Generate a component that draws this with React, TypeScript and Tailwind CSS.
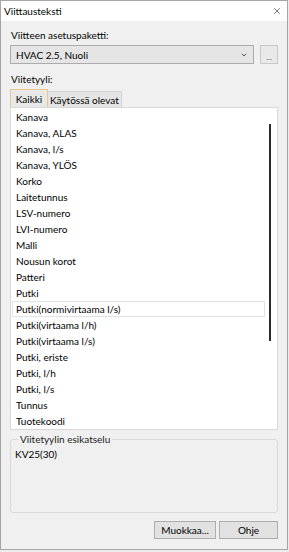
import { X, ChevronDown } from 'lucide-react';

const items = [
  'Kanava',
  'Kanava, ALAS',
  'Kanava, l/s',
  'Kanava, YLÖS',
  'Korko',
  'Laitetunnus',
  'LSV-numero',
  'LVI-numero',
  'Malli',
  'Nousun korot',
  'Patteri',
  'Putki',
  'Putki(normivirtaama l/s)',
  'Putki(virtaama l/h)',
  'Putki(virtaama l/s)',
  'Putki, eriste',
  'Putki, l/h',
  'Putki, l/s',
  'Tunnus',
  'Tuotekoodi',
];

const focused = 'Putki(normivirtaama l/s)';

const App = () => {
  return (
    <div className="w-[289px] h-[552px] bg-[#ececec] font-['Lato','Noto_Sans',sans-serif] text-[10px] leading-[12px] text-black">
      <div className="w-[288px] h-[550px] flex flex-col border border-[#a5a5a5] bg-[#f0f0f0]">
        {/* title bar */}
        <div className="h-[20px] shrink-0 flex items-center justify-between bg-white pl-[3px] pr-[5px]">
          <span>Viittausteksti</span>
          <X className="w-[10px] h-[10px] text-[#333]" strokeWidth={1.6} />
        </div>

        <div className="flex-1 flex flex-col px-[9px] pt-[8px]">
          <label className="pl-[1px]">Viitteen asetuspaketti:</label>

          <div className="mt-[4px] flex gap-[6px]">
            <div className="flex-1 h-[19px] flex items-center justify-between border border-[#acacac] bg-[#e5e5e5] pl-[5px] pr-[5px]">
              <span>HVAC 2.5, Nuoli</span>
              <ChevronDown className="w-[8px] h-[8px] text-[#555]" strokeWidth={3} />
            </div>
            <button className="w-[18px] h-[19px] flex items-end justify-center border border-[#c9c9c9] bg-[#e9e9e9] text-[8px] leading-[12px] text-[#555]">
              ...
            </button>
          </div>

          <label className="mt-[9px] pl-[1px]">Viitetyyli:</label>

          <div className="mt-[4px] flex items-end h-[18px]">
            <div className="h-[18px] w-[38px] flex items-center justify-center border border-b-0 border-[#ecc58c] bg-[#e8e8e8]">
              Kaikki
            </div>
            <div className="h-[16px] px-[2px] flex items-center border border-l-0 border-b-0 border-[#d6d6d6] bg-[#e4e4e4]">
              Käytössä olevat
            </div>
          </div>

          <div className="h-[323px] flex border border-[#d9d9d9] bg-white">
            <div className="flex-1 flex flex-col pt-[1px] pl-[1px]">
              {items.map((item) => (
                <div
                  key={item}
                  className={
                    item === focused
                      ? 'h-[16px] shrink-0 flex items-center border border-[#e2e2e2] pl-[3px]'
                      : 'h-[16px] shrink-0 flex items-center border border-transparent pl-[3px]'
                  }
                >
                  {item}
                </div>
              ))}
            </div>
            <div className="w-[12px] pt-[16px] pl-[4px]">
              <div className="w-[2px] h-[217px] bg-[#2a2a2a]" />
            </div>
          </div>

          <fieldset className="mt-[3px] h-[80px] border border-[#d8d8d8] rounded-[3px] px-[4px]">
            <legend className="ml-[3px] px-[2px] text-[#222]">Viitetyylin esikatselu</legend>
            <div className="mt-[3px]">KV25(30)</div>
          </fieldset>

          <div className="mt-[8px] flex justify-end gap-[3px]">
            <button className="w-[62px] h-[18px] flex items-center justify-center border border-[#adadad] bg-[#e1e1e1]">
              Muokkaa...
            </button>
            <button className="w-[59px] h-[18px] flex items-center justify-center border border-[#adadad] bg-[#e1e1e1]">
              Ohje
            </button>
          </div>
        </div>
      </div>
    </div>
  );
};

export default App;
